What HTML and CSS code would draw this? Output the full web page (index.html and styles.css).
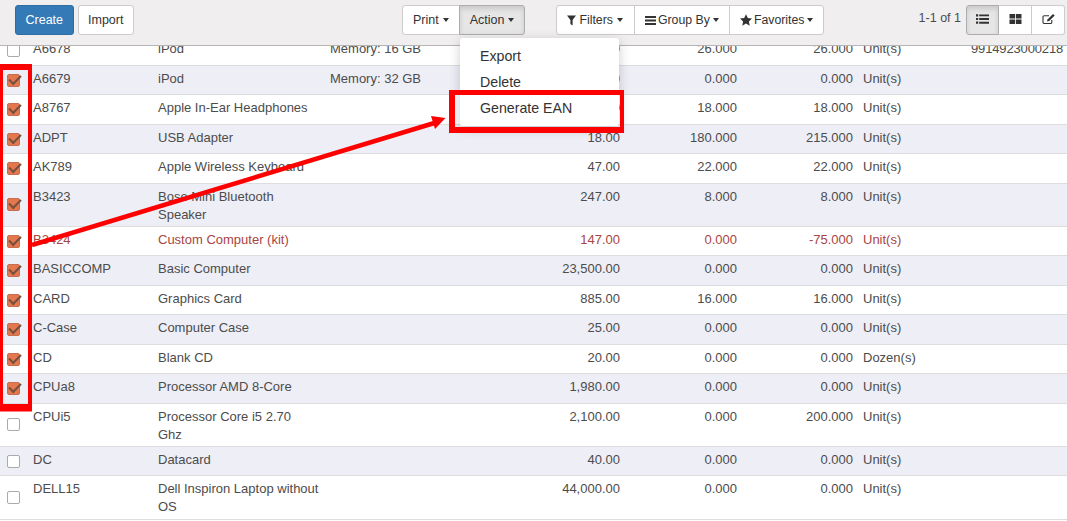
FILE: index.html
```html
<!DOCTYPE html>
<html lang="en">
<head>
<meta charset="utf-8">
<title>Products</title>
<link rel="stylesheet" href="styles.css">
</head>
<body>
<div class="page">
  <header class="toolbar">
    <div class="left-buttons">
      <button class="btn primary">Create</button>
      <button class="btn">Import</button>
    </div>
    <div class="center-buttons">
      <div class="group actions">
        <button class="btn">Print<i class="caret"></i></button>
        <button class="btn active">Action<i class="caret"></i></button>
      </div>
      <div class="group filters">
        <button class="btn"><svg class="ico ico-funnel" viewBox="0 0 9 11"><path d="M0 .5h9L5.600 5V10.500L3.400 9V5z"/></svg>Filters<i class="caret"></i></button>
        <button class="btn"><svg class="ico ico-bars" viewBox="0 0 11 11"><path d="M0 1h11v2H0zM0 4.500h11v2H0zM0 8h11v2H0z"/></svg>Group By<i class="caret"></i></button>
        <button class="btn"><svg class="ico ico-star" viewBox="0 0 12 12"><path d="M6 .3l1.800 3.800 4.200.5-3.100 2.900.8 4.200L6 9.600 2.300 11.700l.8-4.200L0 4.600l4.200-.5z"/></svg>Favorites<i class="caret"></i></button>
      </div>
    </div>
    <div class="right-buttons">
      <span class="pager">1-1 of 1</span>
      <div class="group views">
        <button class="btn view active"><svg class="ico-view" viewBox="0 0 13 10"><path d="M0 .2h2.200v2.200H0zM3.200 .4h9.800v1.900H3.200zM0 3.900h2.200v2.200H0zM3.200 4.100h9.800v1.900H3.200zM0 7.600h2.200v2.200H0zM3.200 7.800h9.800v1.900H3.200z"/></svg></button>
        <button class="btn view"><svg class="ico-view" viewBox="0 0 13 10"><path d="M.5 0h5.600v4.500H.5zM6.900 0h5.600v4.500H6.900zM.5 5.400h5.600v4.500H.5zM6.900 5.400h5.600v4.500H6.900z"/></svg></button>
        <button class="btn view"><svg class="ico-view" viewBox="0 0 13 10"><path fill="none" stroke="currentColor" stroke-width="1.100" d="M9.800 6v2.200a1.300 1.300 0 0 1-1.300 1.300H2.300A1.300 1.300 0 0 1 1 8.200V3A1.300 1.300 0 0 1 2.300 1.700H7"/><path d="M11 0l1.700 1.500L7.200 7 5 7.500l.5-2.100z"/></svg></button>
      </div>
    </div>
  </header>

  <main class="viewport">
    <table class="list">
      <colgroup>
        <col class="c-check"><col class="c-code"><col class="c-name"><col class="c-attr"><col class="c-price"><col class="c-qty"><col class="c-qty2"><col class="c-unit"><col class="c-ean">
      </colgroup>
      <tbody>
        <tr><td class="check"><i class="box"></i></td><td>A6678</td><td>iPod</td><td>Memory: 16 GB</td><td class="num">12.50</td><td class="num">26.000</td><td class="num">26.000</td><td>Unit(s)</td><td class="ean">9914923000218</td></tr>
        <tr><td class="check"><i class="box on"></i></td><td>A6679</td><td>iPod</td><td>Memory: 32 GB</td><td class="num">12.50</td><td class="num">0.000</td><td class="num">0.000</td><td>Unit(s)</td><td></td></tr>
        <tr><td class="check"><i class="box on"></i></td><td>A8767</td><td>Apple In-Ear Headphones</td><td></td><td class="num">79.00</td><td class="num">18.000</td><td class="num">18.000</td><td>Unit(s)</td><td></td></tr>
        <tr><td class="check"><i class="box on"></i></td><td>ADPT</td><td>USB Adapter</td><td></td><td class="num">18.00</td><td class="num">180.000</td><td class="num">215.000</td><td>Unit(s)</td><td></td></tr>
        <tr><td class="check"><i class="box on"></i></td><td>AK789</td><td>Apple Wireless Keyboard</td><td></td><td class="num">47.00</td><td class="num">22.000</td><td class="num">22.000</td><td>Unit(s)</td><td></td></tr>
        <tr><td class="check"><i class="box on"></i></td><td>B3423</td><td>Bose Mini Bluetooth Speaker</td><td></td><td class="num">247.00</td><td class="num">8.000</td><td class="num">8.000</td><td>Unit(s)</td><td></td></tr>
        <tr class="danger"><td class="check"><i class="box on"></i></td><td>B3424</td><td>Custom Computer (kit)</td><td></td><td class="num">147.00</td><td class="num">0.000</td><td class="num">-75.000</td><td>Unit(s)</td><td></td></tr>
        <tr><td class="check"><i class="box on"></i></td><td>BASICCOMP</td><td>Basic Computer</td><td></td><td class="num">23,500.00</td><td class="num">0.000</td><td class="num">0.000</td><td>Unit(s)</td><td></td></tr>
        <tr><td class="check"><i class="box on"></i></td><td>CARD</td><td>Graphics Card</td><td></td><td class="num">885.00</td><td class="num">16.000</td><td class="num">16.000</td><td>Unit(s)</td><td></td></tr>
        <tr><td class="check"><i class="box on"></i></td><td>C-Case</td><td>Computer Case</td><td></td><td class="num">25.00</td><td class="num">0.000</td><td class="num">0.000</td><td>Unit(s)</td><td></td></tr>
        <tr><td class="check"><i class="box on"></i></td><td>CD</td><td>Blank CD</td><td></td><td class="num">20.00</td><td class="num">0.000</td><td class="num">0.000</td><td>Dozen(s)</td><td></td></tr>
        <tr><td class="check"><i class="box on"></i></td><td>CPUa8</td><td>Processor AMD 8-Core</td><td></td><td class="num">1,980.00</td><td class="num">0.000</td><td class="num">0.000</td><td>Unit(s)</td><td></td></tr>
        <tr><td class="check"><i class="box"></i></td><td>CPUi5</td><td>Processor Core i5 2.70<br>Ghz</td><td></td><td class="num">2,100.00</td><td class="num">0.000</td><td class="num">200.000</td><td>Unit(s)</td><td></td></tr>
        <tr><td class="check"><i class="box"></i></td><td>DC</td><td>Datacard</td><td></td><td class="num">40.00</td><td class="num">0.000</td><td class="num">0.000</td><td>Unit(s)</td><td></td></tr>
        <tr><td class="check"><i class="box"></i></td><td>DELL15</td><td>Dell Inspiron Laptop without OS</td><td></td><td class="num">44,000.00</td><td class="num">0.000</td><td class="num">0.000</td><td>Unit(s)</td><td></td></tr>
      </tbody>
    </table>
  </main>

  <ul class="menu">
    <li>Export</li>
    <li>Delete</li>
    <li>Generate EAN</li>
  </ul>

  <svg class="notes" viewBox="0 0 1067 521" width="1067" height="521">
    <path class="mark" d="M0 64H32V411.500H0zM3 70V404H28V70z"/>
    <path class="mark" d="M449 90H624V133H449zM455 95V127H620V95z"/>
    <path class="arrow-line" d="M32 245L436 122.500"/>
    <path class="arrow-head" d="M445.500 118L431 116L435 129z"/>
  </svg>
</div>
</body>
</html>
```
FILE: styles.css
```css
* { box-sizing: border-box; }
html, body { margin: 0; height: 100%; }
body {
  font-family: "Liberation Sans", Arial, sans-serif;
  font-size: 13px;
  line-height: 18.57px;
  color: #4c4c4c;
  background: #fff;
  overflow: hidden;
}
.page { position: relative; display: flex; flex-direction: column; width: 1067px; height: 521px; overflow: hidden; }
.toolbar {
  flex: none;
  display: flex;
  align-items: flex-start;
  height: 46px;
  padding: 5px 2px 0 15px;
  background: #f0eeee;
  border-bottom: 1px solid #b5b5b5;
  position: relative;
  z-index: 2;
}
.left-buttons { display: flex; gap: 4px; width: 387px; }
.left-buttons .btn { padding: 0 9.500px; }
.center-buttons { display: flex; gap: 31px; }
.right-buttons { display: flex; align-items: center; margin-left: auto; gap: 5px; }
.pager { font-size: 12.500px; margin-top: -3px; }
.group { display: flex; }
.btn {
  height: 30px;
  padding: 0 10px;
  font: inherit;
  font-size: 12.500px;
  line-height: 28px;
  color: #333;
  background: #fff;
  border: 1px solid #ccc;
  border-radius: 3px;
  white-space: nowrap;
  display: flex;
  align-items: center;
}
.btn.primary { background: #337ab7; border-color: #2e6da4; color: #fff; }
.group .btn { border-radius: 0; margin-left: -1px; }
.group .btn:first-child { border-radius: 3px 0 0 3px; margin-left: 0; }
.group .btn:last-child { border-radius: 0 3px 3px 0; }
.btn.active { background: #e6e6e6; border-color: #adadad; box-shadow: inset 0 3px 5px rgba(0,0,0,.125); }
.caret {
  width: 0; height: 0;
  margin-left: 3px;
  border-top: 4px solid #333;
  border-left: 3.500px solid transparent;
  border-right: 3.500px solid transparent;
}
.actions .caret { margin-left: 4px; }
.filters .btn { font-size: 12.300px; }
.filters .btn:first-child { padding-right: 11px; }
.filters .btn:first-child .caret { margin-left: 4px; }
.ico { height: 11px; margin-right: 3px; fill: #333; }
.ico-funnel { width: 9px; }
.ico-bars { width: 11px; margin-right: 2px; }
.ico-star { width: 12px; height: 12px; margin-right: 2px; }
.views .btn.view { width: 33px; padding: 0 0 2px; justify-content: center; margin-left: 0; }
.views .btn.view + .btn.view { border-left: 0; }
.ico-view { width: 13px; height: 10px; fill: #333; color: #333; }

.viewport { flex: 1; overflow: hidden; }
.list {
  width: 1067px;
  margin-top: -10.500px;
  table-layout: fixed;
  border-collapse: collapse;
  line-height: 18px;
}
.c-check { width: 28px; }
.c-code { width: 125px; }
.c-name { width: 172px; }
.c-attr { width: 145px; }
.c-price { width: 155px; }
.c-qty { width: 117px; }
.c-qty2 { width: 116px; }
.c-unit { width: 108px; }
.c-ean { width: 101px; }
.list td {
  padding: 3.850px 5px 2.290px;
  vertical-align: top;
  border-top: 1px solid #ddd;
  border-bottom: 1px solid #ddd;
}
.list tr:nth-child(even) { background: #eeeef6; }
.list .num { text-align: right; }
.list td.check { height: 29.470px; vertical-align: middle; padding: 0 0 0 7px; }
.list td.ean { letter-spacing: -.15px; white-space: nowrap; }
.danger td { color: #a94442; }
.box {
  display: block;
  width: 13px;
  height: 13px;
  background: #fff;
  border: 1px solid #aaa;
  border-radius: 2px;
  position: relative;
}
.box.on { background: #e4774e; border-color: #c56f50; }
.box.on::after {
  content: "";
  position: absolute;
  left: 1px;
  top: 0;
  width: 10px;
  height: 5px;
  border-left: 2px solid #74503f;
  border-bottom: 2px solid #74503f;
  transform: rotate(-45deg);
}

.menu {
  position: absolute;
  z-index: 3;
  left: 460px;
  top: 38px;
  width: 158.500px;
  height: 88px;
  margin: 0;
  padding: 5px 0;
  list-style: none;
  background: #fff;
  border-radius: 3px;
  box-shadow: 0 3px 12px rgba(0,0,0,.2);
  font-size: 14.200px;
  color: #333;
}
.menu li { height: 26px; line-height: 26px; padding-left: 20px; }
.notes { position: absolute; z-index: 4; left: 0; top: 0; pointer-events: none; }
.mark { fill: #f00; fill-rule: evenodd; }
.arrow-line { stroke: #f00; stroke-width: 4.500; fill: none; }
.arrow-head { fill: #f00; }
```
